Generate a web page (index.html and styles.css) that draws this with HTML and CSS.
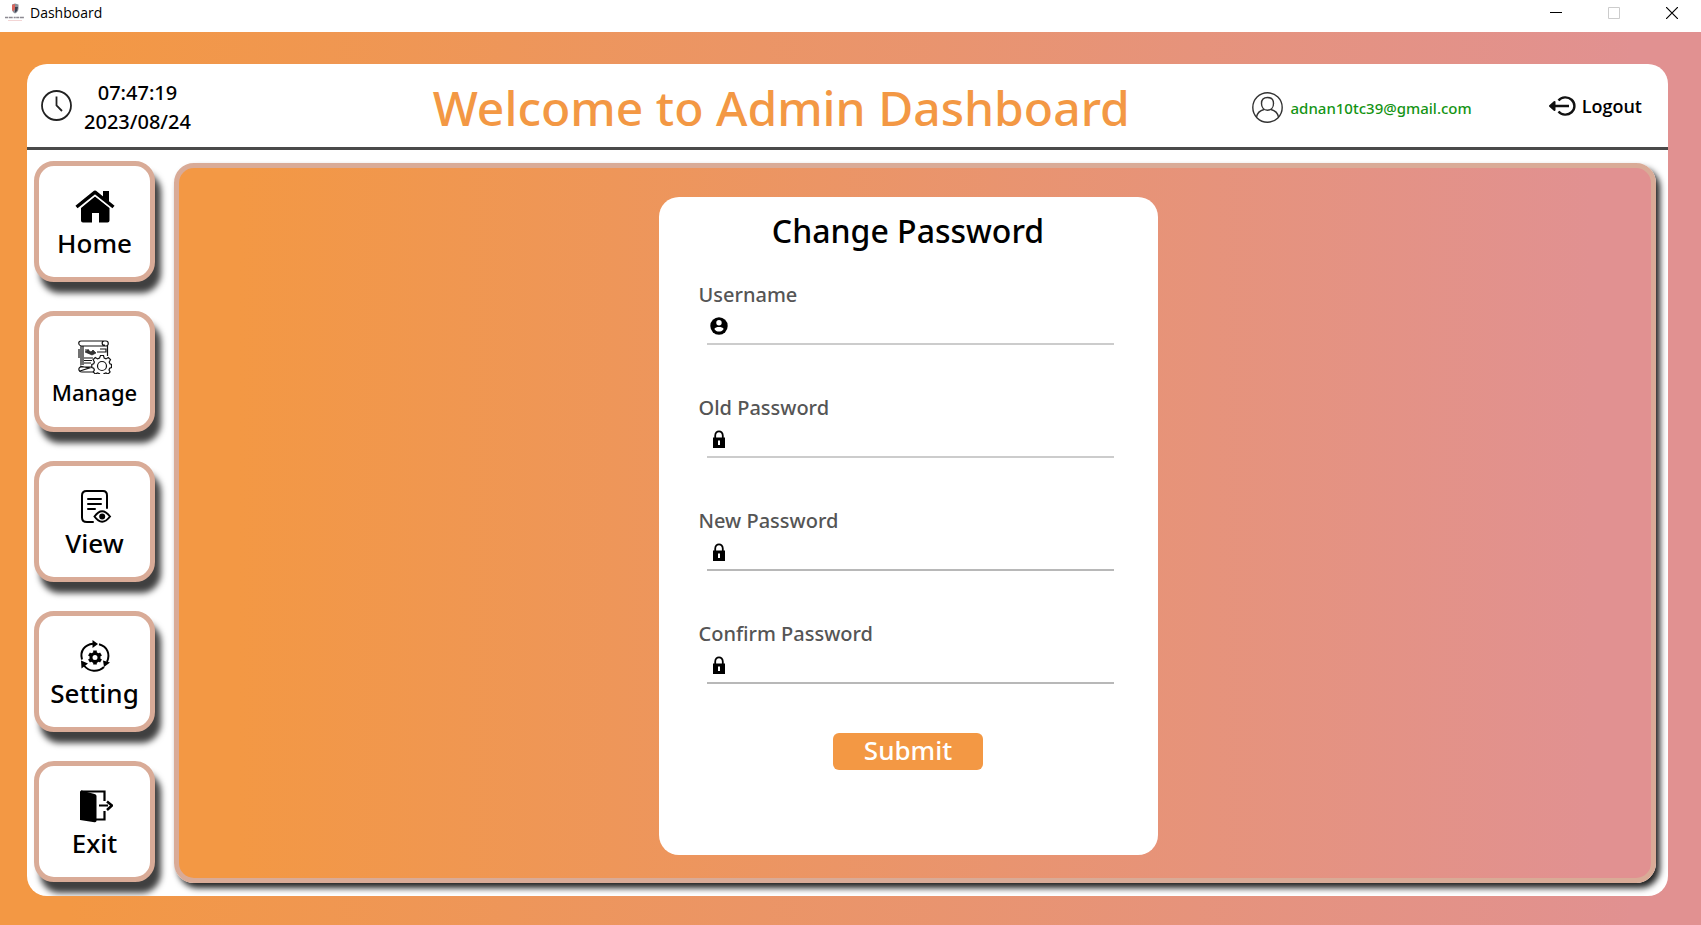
FILE: index.html
```html
<!DOCTYPE html>
<html lang="en">
<head>
<meta charset="utf-8">
<title>Dashboard</title>
<link rel="stylesheet" href="styles.css">
</head>
<body>
<div class="titlebar">
  <svg class="app-icon" width="20" height="20" viewBox="0 0 20 20" aria-hidden="true">
    <path d="M7 1.500 10 .5l3.500 1v4c0 2.500-1.500 4-3.500 5-2-1-3-2.500-3-5z" fill="#8b8f98"/>
    <path d="M7 2 10 1v5L8 8.500C7.200 7.500 7 6.500 7 5.500z" fill="#d9655c"/>
    <path d="M10 4h3l-1 4-2 1.500z" fill="#3c4352"/>
    <path d="M0 14.500h19" stroke="#8d8a92" stroke-width="1.600" stroke-dasharray="3 .7 4 1 2 .5"/>
    <path d="M3 17.500h14" stroke="#f3d5d5" stroke-width="1"/>
  </svg>
  <span class="window-title">Dashboard</span>
  <div class="window-controls">
    <button class="window-button" aria-label="Minimize"><svg width="12" height="12" viewBox="0 0 12 12"><path d="M0 5.500h12" stroke="#000"/></svg></button>
    <button class="window-button" aria-label="Maximize" disabled><svg width="12" height="12" viewBox="0 0 12 12"><path d="M.5.5h11v11H.5z" fill="none" stroke="#ccc"/></svg></button>
    <button class="window-button" aria-label="Close"><svg width="12" height="12" viewBox="0 0 12 12"><path d="m0 0 12 12M12 0 0 12" stroke="#000" stroke-width="1.200"/></svg></button>
  </div>
</div>
<div class="shell">
  <header class="header">
    <div class="clock">
      <svg width="31" height="31" viewBox="0 0 31 31" fill="none" stroke="#222" aria-hidden="true"><circle cx="15.500" cy="15.500" r="14.500" stroke-width="1.800"/><path d="M15.500 6.500v9l5.500 5.500" stroke-width="1.800"/></svg>
      <div class="clock-text"><time>07:47:19</time><time>2023/08/24</time></div>
    </div>
    <h1 class="welcome">Welcome to Admin Dashboard</h1>
    <div class="user">
      <svg width="31" height="31" viewBox="0 0 31 31" fill="none" stroke="#333" stroke-width="1.400" aria-hidden="true"><circle cx="15.500" cy="15.500" r="14.700"/><path d="M15.500 5.500c4 0 6 2.500 6 6 0 4-2.500 6.800-6 6.800s-6-2.800-6-6.800c0-3.500 2-6 6-6z"/><path d="M4.500 25c.8-4 3.500-6.500 7.500-7.500M26.500 25c-.8-4-3.500-6.500-7.500-7.500"/></svg>
      <span class="email">adnan10tc39@gmail.com</span>
    </div>
    <button class="logout">
      <svg width="28" height="20" viewBox="0 0 28 20" fill="none" stroke="#111" stroke-width="2.400" aria-hidden="true"><path d="M9.500 4.500a9 8.600 0 1 1 0 11M20 10H2"/><path d="M1 10 5.500 6v8z" fill="#111" stroke-width="2" stroke-linejoin="round"/></svg>
      <span>Logout</span>
    </button>
  </header>
  <div class="body">
    <nav class="sidebar">
      <button class="tile">
        <svg width="40" height="33" viewBox="0 0 40 33" aria-hidden="true"><path d="M6 18 20 6.500 34.500 18v12.500q0 2-2 2H24v-9.500h-7v9.500H8q-2 0-2-2z"/><path d="M1.500 17 20 2.200 38.500 17" fill="none" stroke="#fff" stroke-width="6"/><path d="M1.500 17 20 2.200 38.500 17" fill="none" stroke="#000" stroke-width="3.400" stroke-linejoin="round"/><path d="M28 1h6v11l-6-5z"/></svg>
        <span>Home</span>
      </button>
      <button class="tile tile-long">
        <svg width="34" height="34" viewBox="0 0 34 34" fill="none" stroke="#111" stroke-width="1.200" aria-hidden="true">
          <path d="M3 6C0 5 0 1 3 1h25c3 0 3 5 0 5zM26 1c-3 1-2 5 1 4M3 6v19M29.500 5v11M5 6v19M1 9v9M16 32H4c-4 0-4-5-1-5h11M2 26l9 2-9 3"/>
          <path d="M7 10h4M22 9h6v3h-6M19 12h4M6 18h9M6 20.500h8M6 23h7"/><path d="M7 12 10 10l3 2 2-2 3 3-4 2z" fill="#333" stroke-width=".6"/>
          <path fill="#fff" d="m22.500 15.500 3 0 .7 2.600 1.800.8 2.300-1.400 2.200 2.200-1.300 2.300.7 1.800 1.600.7v3l-1.800.8-.7 1.700 1.100 2-2.100 2.100-2.100-1.200-2 .8-.7 1.700h-3l-.7-1.700-2-.8-2.100 1.200-2.100-2.100 1.100-2-.7-1.700-1.900-.8v-3l1.900-.7.7-1.800-1.300-2.300 2.200-2.200 2.300 1.400 1.900-.8z"/><circle cx="24" cy="26" r="4.500"/>
        </svg>
        <span>Manage</span>
      </button>
      <button class="tile">
        <svg width="34" height="33" viewBox="0 0 34 33" fill="none" stroke="#000" stroke-width="2" stroke-linecap="round" aria-hidden="true"><path d="M15 32H9c-3 0-5-1.500-5-4.500V5.500C4 3 5.500 1 8.500 1H25c2.500 0 4 2 4 4.500V18M10 9h13M10 14h13M10 19h7"/><path d="M16.500 26.500q7.500-10.500 15.500 0-8 10.500-15.500 0z"/><circle cx="24.200" cy="26.500" r="2" fill="#000"/></svg>
        <span>View</span>
      </button>
      <button class="tile">
        <svg width="32" height="33" viewBox="0 0 32 33" fill="none" stroke="#000" stroke-width="2" aria-hidden="true"><path d="M3 19.500C.5 11 6 4.500 14 3.700M20 4.300c8.500 2.300 11.500 10 8 17.500M25 27c-6 5.500-15 5-20-1.500"/><path d="M13.500 0v8l5.500-4zM24 20.500l7 2-6 4.500zM2 20.500l7 3-6.500 5z" fill="#000" stroke="none"/><circle cx="16" cy="17.500" r="4" stroke-width="3"/><path d="M16 10.500v3M16 21.500v3M10 14l2.500 1.500M19.500 19.500 22 21M22 14l-2.500 1.500M12.500 19.500 10 21" stroke-width="3.600"/></svg>
        <span>Setting</span>
      </button>
      <button class="tile">
        <svg width="36" height="33" viewBox="0 0 36 33" aria-hidden="true"><path d="M3 2q0-1.500 1.500-1.500l13 3.500q2 .7 2 2v24.500q0 2-2 1.700L3 30z"/><path d="M4 1.500h23.500V11M19 29.500h8.500V21" fill="none" stroke="#000" stroke-width="2.200"/><path d="M22 15.500h9" stroke="#000" stroke-width="2.200"/><path d="m30 11.500 5 4-5 4.500" fill="none" stroke="#000" stroke-width="2.600"/></svg>
        <span>Exit</span>
      </button>
    </nav>
    <main class="panel">
      <form class="card">
        <h2 class="card-title">Change Password</h2>
        <div class="field">
          <label for="username">Username</label>
          <div class="field-line">
            <svg width="18" height="18" viewBox="0 0 18 18" aria-hidden="true"><circle cx="9" cy="9" r="8.700"/><circle cx="9" cy="5.800" r="2.700" fill="#fff"/><path d="M4.300 12c1.500-2.600 7.900-2.600 9.400 0-1.800 3.400-7.600 3.400-9.400 0z" fill="#fff"/></svg>
            <input id="username" type="text">
          </div>
        </div>
        <div class="field">
          <label for="old">Old Password</label>
          <div class="field-line">
            <svg width="18" height="18" viewBox="0 0 18 18" aria-hidden="true"><path d="M3 7.500h12V18H3z"/><path d="M5.200 9V5.800c0-6 7.600-6 7.600 0V9" fill="none" stroke="#000" stroke-width="1.800"/><path d="M8 10.500h2V15H8z" fill="#fff"/></svg>
            <input id="old" type="password">
          </div>
        </div>
        <div class="field">
          <label for="new">New Password</label>
          <div class="field-line field-line-dark">
            <svg width="18" height="18" viewBox="0 0 18 18" aria-hidden="true"><path d="M3 7.500h12V18H3z"/><path d="M5.200 9V5.800c0-6 7.600-6 7.600 0V9" fill="none" stroke="#000" stroke-width="1.800"/><path d="M8 10.500h2V15H8z" fill="#fff"/></svg>
            <input id="new" type="password">
          </div>
        </div>
        <div class="field">
          <label for="confirm">Confirm Password</label>
          <div class="field-line field-line-dark">
            <svg width="18" height="18" viewBox="0 0 18 18" aria-hidden="true"><path d="M3 7.500h12V18H3z"/><path d="M5.200 9V5.800c0-6 7.600-6 7.600 0V9" fill="none" stroke="#000" stroke-width="1.800"/><path d="M8 10.500h2V15H8z" fill="#fff"/></svg>
            <input id="confirm" type="password">
          </div>
        </div>
        <button class="submit" type="submit">Submit</button>
      </form>
    </main>
  </div>
</div>
</body>
</html>
```
FILE: styles.css
```css
* {
  box-sizing: border-box;
}

body {
  margin: 0;
  min-height: 100vh;
  display: flex;
  flex-direction: column;
  background: linear-gradient(90deg, #f39844 4%, #e19191 96%);
  color: #000;
  font-family: "Noto Sans", "Open Sans", sans-serif;
  font-weight: 500;
}

button {
  font: inherit;
  color: inherit;
  border: 0;
  background: none;
  padding: 0;
}

svg {
  display: block;
  flex: none;
}

.titlebar {
  display: flex;
  align-items: flex-start;
  height: 32px;
  padding-left: 5px;
  background: #fff;
}

.app-icon {
  margin-top: 3px;
}

.window-title {
  margin-left: 5px;
  font: 400 14px/26px "Open Sans", sans-serif;
}

.window-controls {
  display: flex;
  margin-left: auto;
}

.window-button {
  display: grid;
  place-items: center;
  width: 58px;
  height: 26px;
}

.shell {
  flex: 1;
  display: flex;
  flex-direction: column;
  margin: 32px 33px 29px 27px;
  border-radius: 20px;
  background: #fff;
  overflow: hidden;
}

.header {
  display: flex;
  align-items: center;
  height: 86px;
  padding: 0 26px 0 14px;
  border-bottom: 3px solid #4a4a4a;
}

.clock {
  display: flex;
  align-items: center;
  gap: 12px;
}

.clock-text {
  display: flex;
  flex-direction: column;
  align-items: center;
  padding-top: 2px;
  font-size: 20px;
  line-height: 29px;
}

.welcome {
  flex: 1;
  margin: 0;
  padding: 4px 0 0 120px;
  text-align: center;
  color: #f39844;
  font-size: 48px;
  line-height: 56px;
  font-weight: 500;
  white-space: nowrap;
}

.user {
  display: flex;
  align-items: center;
  gap: 8px;
  padding-top: 4px;
}

.email {
  color: #149414;
  font-size: 15px;
}

.logout {
  display: flex;
  align-items: center;
  gap: 5px;
  margin-left: 77px;
  font: 600 18px/24px "Open Sans", sans-serif;
}

.body {
  flex: 1;
  display: flex;
  gap: 19px;
  padding: 11px 12px 13px 7px;
}

.sidebar {
  display: flex;
  flex-direction: column;
  gap: 29px;
}

.tile {
  display: flex;
  flex-direction: column;
  align-items: center;
  width: 121px;
  height: 121px;
  padding-top: 24px;
  border: 5px solid #d9ab97;
  border-radius: 20px;
  background: #fff;
  box-shadow: 6px 11px 6px #404040;
  font-size: 26px;
  line-height: 40px;
}

.tile-long {
  font-size: 22px;
  line-height: 36px;
}

.panel {
  flex: 1;
  display: flex;
  justify-content: center;
  align-items: flex-start;
  margin-top: 2px;
  padding: 29px 14px 23px 0;
  border: 5px solid #d9ab97;
  border-radius: 20px;
  background: linear-gradient(90deg, #f39844 4%, #e19191 96%);
  box-shadow: 4px 5px 6px #222;
}

.card {
  display: flex;
  flex-direction: column;
  width: 499px;
  padding: 12px 40px 85px;
  border-radius: 20px;
  background: #fff;
}

.card-title {
  margin: 0 0 28px;
  text-align: center;
  font-size: 32px;
  line-height: 44px;
  font-weight: 500;
}

.field {
  height: 113px;
}

.field label {
  display: block;
  color: #555;
  font-size: 20px;
  line-height: 28px;
}

.field-line {
  display: flex;
  align-items: center;
  gap: 8px;
  height: 36px;
  margin: 0 4px 0 8px;
  padding-left: 3px;
  border-bottom: 2px solid #ccc;
}

.field-line-dark {
  border-color: #b8b8b8;
}

.field-line input {
  flex: 1;
  min-width: 0;
  border: 0;
  outline: 0;
  background: none;
  font: inherit;
  font-size: 18px;
}

.submit {
  align-self: center;
  width: 150px;
  height: 37px;
  padding-bottom: 4px;
  border-radius: 6px;
  background: #f39844;
  color: #fff;
  font-size: 26px;
  line-height: 32px;
}
```
